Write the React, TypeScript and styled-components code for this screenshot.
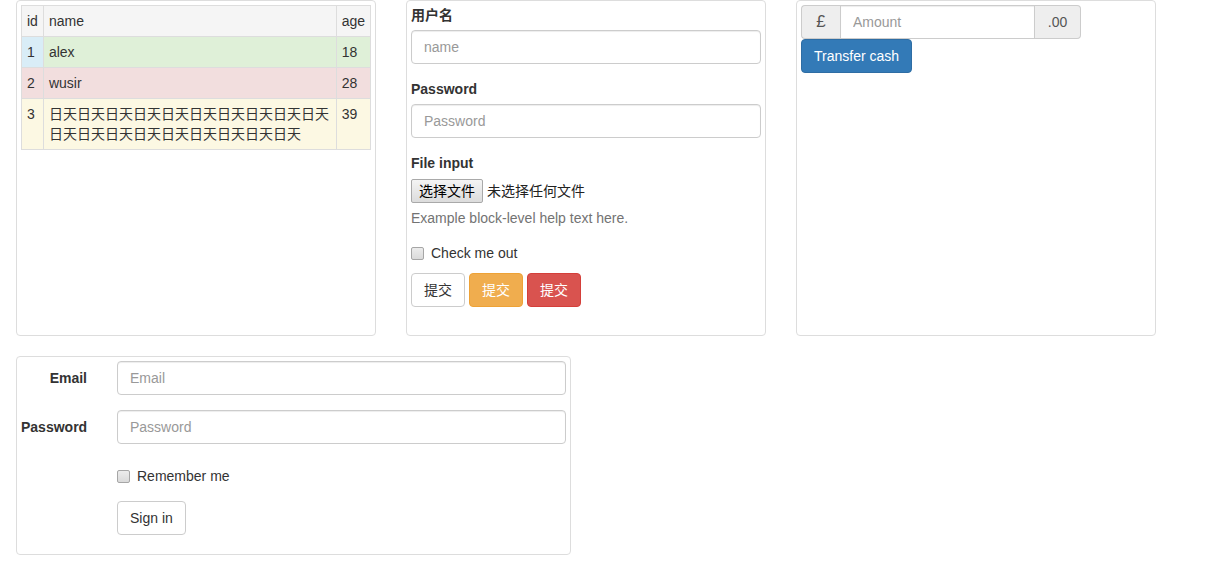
import React from 'react';
import styled, { createGlobalStyle } from 'styled-components';

const GlobalStyle = createGlobalStyle`
  html, body {
    margin: 0;
    padding: 0;
    background: #fff;
  }
  body {
    font-family: 'Liberation Sans', 'Noto Sans CJK SC', sans-serif;
    font-size: 14px;
    line-height: 20px;
    color: #333;
  }
  * {
    box-sizing: border-box;
  }
`;

const Page = styled.div`
  display: flex;
  flex-direction: column;
  gap: 20px;
  padding-left: 16px;
`;

const TopRow = styled.div`
  display: flex;
  gap: 30px;
`;

const Panel = styled.div<{ $width: number; $height?: number }>`
  width: ${(p) => p.$width}px;
  height: ${(p) => (p.$height ? `${p.$height}px` : 'auto')};
  border: 1px solid #ddd;
  border-radius: 4px;
  padding: 4px;
  background: #fff;
`;

/* ---------- table ---------- */

const DataTable = styled.table`
  width: 100%;
  border-collapse: collapse;
  border: 1px solid #ddd;
`;

const Cell = styled.td<{ $bg?: string; $w?: number }>`
  padding: 5px;
  border: 1px solid #ddd;
  vertical-align: top;
  text-align: left;
  font-weight: normal;
  background: ${(p) => p.$bg || 'transparent'};
  width: ${(p) => (p.$w ? `${p.$w}px` : 'auto')};
  white-space: ${(p) => (p.$w ? 'nowrap' : 'normal')};
`;

/* ---------- form bits ---------- */

const FormGroup = styled.div<{ $mb?: number }>`
  display: flex;
  flex-direction: column;
  margin-bottom: ${(p) => (p.$mb !== undefined ? p.$mb : 15)}px;
`;

const Label = styled.label`
  display: block;
  font-weight: bold;
  margin-bottom: 5px;
`;

const TextInput = styled.input`
  display: block;
  width: 100%;
  height: 34px;
  padding: 6px 12px;
  font-family: inherit;
  font-size: 14px;
  line-height: 20px;
  color: #555;
  background: #fff;
  border: 1px solid #ccc;
  border-radius: 4px;
  box-shadow: inset 0 1px 1px rgba(0, 0, 0, 0.075);
  outline: none;
  &::placeholder {
    color: #999;
  }
`;

const FileRow = styled.div`
  display: flex;
  align-items: center;
  gap: 4px;
  height: 25px;
`;

const FileButton = styled.span`
  display: inline-flex;
  align-items: center;
  justify-content: center;
  width: 72px;
  height: 24px;
  font-size: 14px;
  color: #000;
  background: linear-gradient(#f4f4f4, #dcdcdc);
  border: 1px solid #a9a9a9;
  border-radius: 2px;
`;

const FileName = styled.span`
  color: #222;
`;

const HelpText = styled.p`
  margin: 5px 0 0;
  color: #737373;
`;

const CheckRow = styled.label<{ $top?: number; $mb?: number }>`
  display: flex;
  align-items: flex-start;
  gap: 7px;
  padding-top: ${(p) => p.$top || 0}px;
  margin-bottom: ${(p) => p.$mb || 0}px;
  min-height: 20px;
  cursor: pointer;
`;

const CheckBox = styled.input.attrs({ type: 'checkbox' })`
  appearance: none;
  -webkit-appearance: none;
  width: 13px;
  height: 13px;
  margin: 4px 0 0;
  border: 1px solid #a6a6a6;
  border-radius: 2px;
  background: linear-gradient(#ececec, #dadada);
  flex-shrink: 0;
`;

const ButtonRow = styled.div`
  display: flex;
  gap: 4px;
`;

const tones: Record<string, { bg: string; border: string; color: string }> = {
  default: { bg: '#fff', border: '#ccc', color: '#333' },
  warning: { bg: '#f0ad4e', border: '#eea236', color: '#fff' },
  danger: { bg: '#d9534f', border: '#d43f3a', color: '#fff' },
  primary: { bg: '#337ab7', border: '#2e6da4', color: '#fff' },
};

const Button = styled.button<{ $tone?: string }>`
  display: inline-block;
  height: 34px;
  padding: 6px 12px;
  font-family: inherit;
  font-size: 14px;
  line-height: 20px;
  border-radius: 4px;
  cursor: pointer;
  background: ${(p) => tones[p.$tone || 'default'].bg};
  border: 1px solid ${(p) => tones[p.$tone || 'default'].border};
  color: ${(p) => tones[p.$tone || 'default'].color};
`;

/* ---------- input group ---------- */

const TransferForm = styled.div`
  display: flex;
  flex-direction: column;
  align-items: flex-start;
`;

const InputGroup = styled.div`
  display: flex;
  width: 280px;
  height: 34px;
`;

const Addon = styled.span<{ $side: 'left' | 'right'; $w: number; $big?: boolean }>`
  display: flex;
  align-items: center;
  justify-content: center;
  width: ${(p) => p.$w}px;
  flex-shrink: 0;
  color: #555;
  font-size: ${(p) => (p.$big ? '17px' : '14px')};
  background: #eee;
  border: 1px solid #ccc;
  border-radius: ${(p) => (p.$side === 'left' ? '4px 0 0 4px' : '0 4px 4px 0')};
  ${(p) => (p.$side === 'left' ? 'border-right: 0;' : 'border-left: 0;')}
`;

const GroupInput = styled(TextInput)`
  flex: 1;
  width: auto;
  min-width: 0;
  border-radius: 0;
`;

/* ---------- horizontal form ---------- */

const HRow = styled.div`
  display: grid;
  grid-template-columns: 66px 1fr;
  column-gap: 30px;
  margin-bottom: 15px;
`;

const HLabel = styled.label`
  padding-top: 7px;
  font-weight: bold;
  text-align: right;
  white-space: nowrap;
`;

const HCheckWrap = styled.div`
  min-height: 27px;
`;

const ButtonWrap = styled.div`
  display: flex;
`;

const longName = '日天'.repeat(19);

const App = () => {
  return (
    <>
      <GlobalStyle />
      <Page>
        <TopRow>
          <Panel $width={360} $height={336}>
            <DataTable>
              <tbody>
                <tr>
                  <Cell as="th" $bg="#f5f5f5" $w={12}>id</Cell>
                  <Cell as="th" $bg="#f5f5f5">name</Cell>
                  <Cell as="th" $bg="#f5f5f5" $w={26}>age</Cell>
                </tr>
                <tr>
                  <Cell $bg="#d9edf7" $w={12}>1</Cell>
                  <Cell $bg="#dff0d8">alex</Cell>
                  <Cell $bg="#dff0d8" $w={26}>18</Cell>
                </tr>
                <tr>
                  <Cell $bg="#f2dede" $w={12}>2</Cell>
                  <Cell $bg="#f2dede">wusir</Cell>
                  <Cell $bg="#f2dede" $w={26}>28</Cell>
                </tr>
                <tr>
                  <Cell $bg="#fcf8e3" $w={12}>3</Cell>
                  <Cell $bg="#fcf8e3">{longName}</Cell>
                  <Cell $bg="#fcf8e3" $w={26}>39</Cell>
                </tr>
              </tbody>
            </DataTable>
          </Panel>

          <Panel $width={360} $height={336}>
            <FormGroup>
              <Label>用户名</Label>
              <TextInput placeholder="name" />
            </FormGroup>
            <FormGroup>
              <Label>Password</Label>
              <TextInput type="password" placeholder="Password" />
            </FormGroup>
            <FormGroup>
              <Label>File input</Label>
              <FileRow>
                <FileButton>选择文件</FileButton>
                <FileName>未选择任何文件</FileName>
              </FileRow>
              <HelpText>Example block-level help text here.</HelpText>
            </FormGroup>
            <CheckRow $mb={10}>
              <CheckBox />
              <span>Check me out</span>
            </CheckRow>
            <ButtonRow>
              <Button>提交</Button>
              <Button $tone="warning">提交</Button>
              <Button $tone="danger">提交</Button>
            </ButtonRow>
          </Panel>

          <Panel $width={360} $height={336}>
            <TransferForm>
              <InputGroup>
                <Addon $side="left" $w={39} $big>£</Addon>
                <GroupInput placeholder="Amount" />
                <Addon $side="right" $w={46}>.00</Addon>
              </InputGroup>
              <Button $tone="primary">Transfer cash</Button>
            </TransferForm>
          </Panel>
        </TopRow>

        <Panel $width={555}>
          <HRow>
            <HLabel>Email</HLabel>
            <TextInput type="email" placeholder="Email" />
          </HRow>
          <HRow>
            <HLabel>Password</HLabel>
            <TextInput type="password" placeholder="Password" />
          </HRow>
          <HRow>
            <span />
            <HCheckWrap>
              <CheckRow $top={7}>
                <CheckBox />
                <span>Remember me</span>
              </CheckRow>
            </HCheckWrap>
          </HRow>
          <HRow>
            <span />
            <ButtonWrap>
              <Button>Sign in</Button>
            </ButtonWrap>
          </HRow>
        </Panel>
      </Page>
    </>
  );
};

export default App;
